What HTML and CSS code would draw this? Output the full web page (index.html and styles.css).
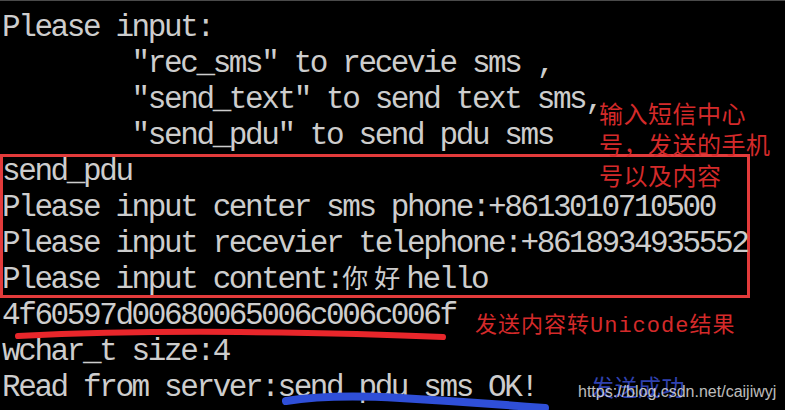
FILE: index.html
```html
<!DOCTYPE html>
<html>
<head>
<link rel="stylesheet" href="styles.css">
</head>
<body>

<div class="term">
<div class="line">Please input:</div>
<div class="line">        "rec_sms" to recevie sms ,</div>
<div class="line">        "send_text" to send text sms,</div>
<div class="line">        "send_pdu" to send pdu sms</div>

<div class="box">
<div class="line">send_pdu</div>
<div class="line">Please input center sms phone:+8613010710500</div>
<div class="line">Please input recevier telephone:+8618934935552</div>
<div class="line">Please input content:<span class="cjk">你好</span>hello</div>
</div>

<div class="line">4f60597d00680065006c006c006f</div>
<div class="line">wchar_t size:4</div>
<div class="line">Read from server:send_pdu_sms OK!</div>
</div>

<!-- hand drawn marks over the console -->
<svg class="marks" width="785" height="410" viewBox="0 0 785 410">
  <path d="M18 336 Q 120 331 240 332 T 443 337" stroke="#e8262b" stroke-width="6" fill="none" stroke-linecap="round"/>
  <path d="M286 401 Q 330 394 400 398 T 545 408" stroke="#2f4fd8" stroke-width="8" fill="none" stroke-linecap="round"/>
</svg>

<div class="note note-red">输入短信中心<br>号，发送的手机<br>号以及内容</div>
<div class="note note-uni">发送内容转<span class="latin">Unicode</span>结果</div>
<div class="note note-blue">发送成功</div>
<div class="watermark">https://blog.csdn.net/caijiwyj</div>

</body>
</html>
```

FILE: styles.css
```css
body {
  margin: 0;
  background-color: #000000;
  border-top: 1px solid #4a4a4a;
  width: 785px;
  height: 409px;
  overflow: hidden;
  position: relative;
}

/* console text */
.term {
  padding-top: 9px;
  color: #cdcdcd;
  font-family: "Liberation Mono", monospace;
  font-size: 31px;
  letter-spacing: -2.4px;
}

.line {
  height: 36px;
  line-height: 36px;
  padding-left: 2px;
  white-space: pre;
}

.cjk {
  font-family: "Noto Sans CJK SC", sans-serif;
  font-size: 26px;
  line-height: 20px;
  letter-spacing: 6px;
}

.box {
  width: 750px;
  box-shadow: inset 0 0 0 3px #e23b3b;
}

.marks {
  position: absolute;
  left: 0;
  top: -1px;
}

/* annotations */
.note {
  position: absolute;
  font-family: "Noto Sans CJK SC", sans-serif;
  white-space: nowrap;
}

.note-red {
  left: 599px;
  top: 96px;
  color: #d42a2a;
  font-size: 24px;
  line-height: 31px;
  letter-spacing: 0.5px;
}

.note-uni {
  left: 475px;
  top: 306px;
  color: #d42a2a;
  font-size: 22px;
  line-height: 30px;
  letter-spacing: 1px;
}

.latin {
  font-family: "Liberation Mono", monospace;
}

.note-blue {
  left: 591px;
  top: 370px;
  color: #3042b0;
  font-size: 23px;
  line-height: 30px;
  letter-spacing: 0.5px;
}

.watermark {
  position: absolute;
  left: 578px;
  top: 380px;
  color: rgba(225, 225, 225, 0.85);
  font-family: "Liberation Sans", Arial, sans-serif;
  font-size: 16px;
  line-height: 22px;
}
```
